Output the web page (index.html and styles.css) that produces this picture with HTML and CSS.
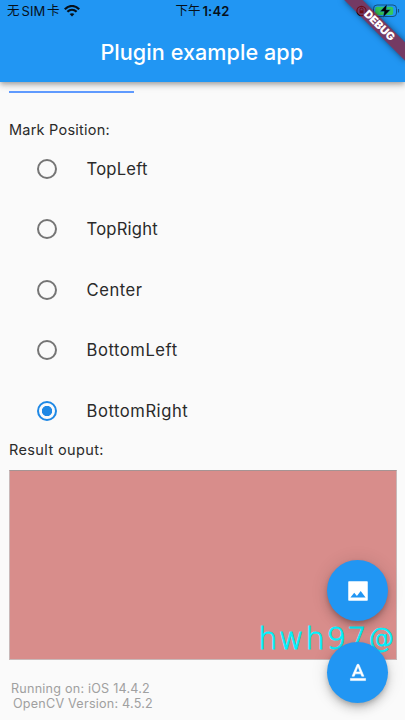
FILE: index.html
```
<!DOCTYPE html>
<html lang="en">
<head>
<meta charset="utf-8">
<title>Plugin example app</title>
<link rel="stylesheet" href="styles.css">
</head>
<body>
<div class="app">
  <header class="appbar">
    <div class="status">
      <div class="carrier"><span>无</span><span class="sim">SIM</span><span>卡</span>
        <svg class="wifi" width="16" height="12" viewBox="0 0 16 12"><path d="M.8 4.200C5-.1 11-.1 15.200 4.200M3.400 6.800c2.700-2.700 6.500-2.700 9.200 0" fill="none" stroke="#061019" stroke-width="2.200"/><path d="M5.600 9.100c1.400-1.300 3.400-1.300 4.800 0L8 11.600z" fill="#061019"/></svg>
      </div>
      <div class="clock"><span class="ampm">下午</span><span class="time">1:42</span></div>
      <svg class="power" width="45" height="14" viewBox="0 0 45 14">
        <circle cx="5.500" cy="7" r="4.600" fill="none" stroke="#061019" stroke-width="1.200"/>
        <path d="M4 6.300V5.500a1.500 1.500 0 0 1 3 0v.8" fill="none" stroke="#061019"/><path d="M3.500 6.300h4v3h-4z" fill="#061019"/>
        <rect x="17.500" y="1" width="23" height="11.500" rx="3.500" fill="none" stroke="#125283"/>
        <rect x="19.200" y="2.700" width="18" height="8.200" rx="2" fill="#34c759"/>
        <path d="M42.500 5v3.500" stroke="#125283" stroke-width="1.200"/>
        <path d="M31 0l-7 7.600h4.200l-1.200 6 7.500-7.900h-4.300z" fill="#000" stroke="#2196f3" stroke-width=".4"/>
      </svg>
    </div>
    <h1 class="title">Plugin example app</h1>
  </header>
  <main class="content">
    <div class="underline"></div>
    <p class="label mark">Mark Position:</p>
    <div class="options">
      <label class="option"><span class="radio"></span><span class="short">TopLeft</span></label>
      <label class="option"><span class="radio"></span><span class="short">TopRight</span></label>
      <label class="option"><span class="radio"></span><span>Center</span></label>
      <label class="option"><span class="radio"></span><span>BottomLeft</span></label>
      <label class="option"><span class="radio on"></span><span>BottomRight</span></label>
    </div>
    <p class="label result">Result ouput:</p>
    <div class="output"><span class="watermark">hwh97<span class="at">@</span></span></div>
    <div class="info"><div>Running on: iOS 14.4.2</div><div class="cv">OpenCV Version: 4.5.2</div></div>
  </main>
  <div class="fabs">
    <div class="fab"><svg width="26" height="26" viewBox="0 0 24 24"><path fill="#fff" d="M20.500 21H3.500L3 20.500V3.500L3.500 3h17l.5.500v17zM8.500 13.500L5 18h14l-4.500-6-3.500 4.510z"/></svg></div>
    <div class="fab"><svg width="26" height="26" viewBox="0 0 24 24"><path fill="#fff" stroke="#fff" stroke-width=".5" d="M5 17v2h14v-2H5zm4.500-4.200h5l.9 2.200h2.100L12.750 4h-1.500L6.500 15h2.100l.9-2.200zM12 5.980L13.870 11h-3.740L12 5.980z"/></svg></div>
  </div>
  <div class="corner"><div class="banner">DEBUG</div></div>
</div>
</body>
</html>
```
FILE: styles.css
```
* { box-sizing: border-box; }
body { margin: 0; background: #fafafa; font-family: Inter, "Noto Sans CJK SC", sans-serif; }
.app { position: relative; width: 405px; height: 720px; overflow: hidden; }
.appbar {
  position: relative;
  height: 82px;
  background: #2196f3;
  box-shadow: 0 2px 4px -1px rgba(0,0,0,.2), 0 4px 5px rgba(0,0,0,.14), 0 1px 10px rgba(0,0,0,.12);
}
.status {
  display: grid;
  grid-template-columns: 1fr auto 1fr;
  height: 22px;
  align-items: center;
  color: #061019;
  font-size: 12.5px;
  line-height: 22px;
}
.carrier { display: flex; align-items: center; padding-left: 7px; }
.sim { margin: 0 1.5px 0 2px; font-size: 13px; letter-spacing: .1px; }
.wifi { margin-left: 5px; }
.clock { display: flex; }
.time { margin-left: 2px; font-size: 13px; font-weight: 600; letter-spacing: .2px; }
.power { justify-self: end; margin-right: 4px; }
.title {
  margin: 0;
  padding-right: 1.5px;
  height: 60px;
  line-height: 60px;
  text-align: center;
  color: #fff;
  font-size: 21.6px;
  font-weight: 500;
  letter-spacing: .05px;
}
.content { padding: 9px 9px 0; color: #2a2a2a; }
.underline { width: 125px; height: 2px; background: #448aff; opacity: .85; }
.label { margin: 0; height: 18px; line-height: 18px; font-size: 14.5px; letter-spacing: .23px; }
.mark { margin-top: 27.500px; }
.result { letter-spacing: .38px; }
.options { margin-top: 0; height: 302.500px; display: grid; grid-template-rows: repeat(5, 1fr); }
.option { display: flex; align-items: center; font-size: 16.6px; letter-spacing: .55px; line-height: 20px; }
.short { letter-spacing: .22px; }
.radio {
  width: 20px;
  height: 20px;
  margin: 0 29.500px 0 28px;
  border: 2px solid #757575;
  border-radius: 50%;
}
.on { border-color: #1e88e5; background: radial-gradient(circle, #1e88e5 4.800px, transparent 5.500px); }
.output {
  display: flex;
  justify-content: flex-end;
  align-items: flex-end;
  margin-top: 11px;
  width: 388px;
  height: 190px;
  border: 1px solid #c9b9b9;
  border-top-color: #a59494;
  background: #d88d8b;
}
.watermark {
  margin-right: 2px;
  font-family: "DejaVu Sans", sans-serif;
  font-weight: 200;
  font-size: 31px;
  line-height: 38px;
  letter-spacing: 1.200px;
  color: #00f2ff;
  -webkit-text-stroke: .8px #00f2ff;
}
.at { font-size: 26px; letter-spacing: 0; position: relative; top: -2px; }
.info { margin: 21px 0 0 2px; color: #a0a0a0; font-size: 12.6px; line-height: 15px; letter-spacing: .22px; }
.cv { margin-left: 2px; }
.fabs { position: absolute; right: 17px; top: 560px; display: grid; gap: 21px; }
.fab {
  display: grid;
  place-items: center;
  width: 61px;
  height: 61px;
  border-radius: 50%;
  background: #2196f3;
  box-shadow: 0 3px 5px -1px rgba(0,0,0,.2), 0 6px 10px rgba(0,0,0,.14), 0 1px 18px rgba(0,0,0,.12);
}
.corner { position: absolute; top: 0; right: 0; width: 70px; height: 70px; overflow: hidden; }
.banner {
  position: absolute;
  left: 27px;
  top: 30.250px;
  width: 86.400px;
  height: 13px;
  transform-origin: 43.200px -30.250px;
  transform: rotate(45deg);
  background: rgba(160,10,24,.66);
  box-shadow: 0 0 6px rgba(0,0,0,.5);
  color: #fff;
  font-size: 11px;
  font-weight: 900;
  line-height: 13px;
  text-align: center;
}
```
